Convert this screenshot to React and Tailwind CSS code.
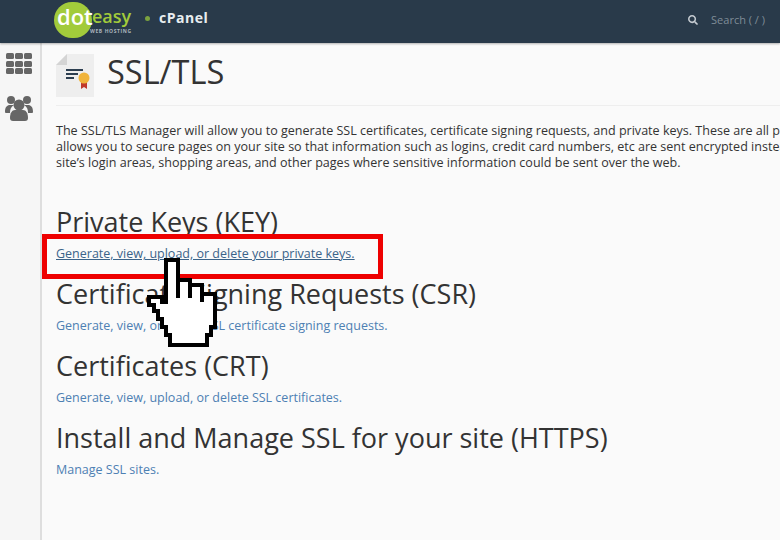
import React from "react"
import { FaSearch } from "react-icons/fa"

const sections = [
  { title: "Private Keys (KEY)", link: "Generate, view, upload, or delete your private keys.", active: true },
  { title: "Certificate Signing Requests (CSR)", link: "Generate, view, or delete SSL certificate signing requests." },
  { title: "Certificates (CRT)", link: "Generate, view, upload, or delete SSL certificates." },
  { title: "Install and Manage SSL for your site (HTTPS)", link: "Manage SSL sites." },
]

const Logo = () => (
  <div className="relative w-[80px] h-[43px] shrink-0">
    <div className="absolute left-0 top-[2px] w-[38px] h-[36px] rounded-full bg-[#a2cb3b]" />
    <span className="absolute left-[3px] top-[3px] text-[22px] leading-[26px] font-semibold text-white">dot</span>
    <span className="absolute left-[38px] top-[3px] text-[18px] leading-[26px] font-semibold text-[#a2cb3b]">easy</span>
    <span className="absolute left-[36px] top-[28px] text-[5px] leading-[6px] tracking-[0.6px] font-bold text-[#aab4bc] whitespace-nowrap">WEB HOSTING</span>
  </div>
)

const DocIcon = () => (
  <svg width="38" height="43" viewBox="0 0 38 43" className="shrink-0">
    <path d="M11 0H38V43H0V11Z" fill="#eeeeee" />
    <path d="M11 0V11H0Z" fill="#d4d4d4" />
    <path d="M10 15H27V17H10ZM10 19H22V21H10ZM10 23H18V25H10Z" fill="#2c3e50" />
    <path d="M25 28H31V35L28 33L25 35Z" fill="#c0392b" />
    <circle cx="28" cy="24" r="5.500" fill="#f0b43c" />
  </svg>
)

const UsersIcon = () => (
  <svg width="28" height="26" viewBox="0 0 28 26" className="shrink-0">
    <g fill="#666666">
      <circle cx="6" cy="5" r="4" />
      <circle cx="22" cy="5" r="4" />
      <path d="M0 17C0 12 2 10 5 10H9C6 12 5 14 5 18H2C1 18 0 18 0 17ZM28 17C28 12 26 10 23 10H19C22 12 23 14 23 18H26C27 18 28 18 28 17Z" />
      <circle cx="14" cy="10" r="5.500" />
      <path d="M5 23C5 18 7 15 10 15H18C21 15 23 18 23 23C23 25 22 26 20 26H8C6 26 5 25 5 23Z" />
    </g>
  </svg>
)

const Cursor = () => (
  <svg width="80" height="95" viewBox="145 256 80 95" className="absolute left-[145px] top-[256px]">
    <path
      d="M166 260H178V280H190V285H202V294H215V327H211V335H207V345H170V335H166V327H162V319H158V311H154V305H149V297H162V302H166Z"
      fill="#ffffff"
      stroke="#000000"
      strokeWidth="4"
    />
    <path d="M178 280V298M190 285V298M202 294V302" fill="none" stroke="#000000" strokeWidth="4" />
  </svg>
)

export default function App() {
  return (
    <div className="relative w-[780px] h-[540px] overflow-hidden flex flex-col bg-[#fafafa] text-[#333333] font-['Open_Sans',sans-serif]">
      {/* HEADER */}
      <header className="h-[43px] shrink-0 bg-[#293a4a] flex items-center pl-[54px] pr-[15px] shadow-[0_1px_2px_rgba(0,0,0,0.3)] z-10">
        <Logo />
        <span className="ml-[11px] mb-[6px] w-[5px] h-[5px] rounded-full bg-[#7ba23f]" />
        <span className="ml-[9px] mb-[9px] text-[14px] font-bold tracking-[0.5px] text-[#e8edf0]">cPanel</span>
        <div className="ml-auto flex items-center gap-[13px] mb-[3px]">
          <FaSearch className="text-[#c4cad0] text-[10px]" />
          <span className="text-[11px] text-[#7f8c97]">Search ( / )</span>
        </div>
      </header>

      <div className="flex flex-1 min-h-0">
        {/* SIDEBAR */}
        <aside className="w-[42px] shrink-0 bg-[#f6f6f6] border-r-2 border-[#dedede] flex flex-col items-center pt-[10px] pr-[2px] gap-[21px]">
          <div className="grid grid-cols-3 gap-[1.500px] w-[26px]">
            {Array.from({ length: 9 }).map((_, i) => (
              <span key={i} className="h-[6px] rounded-[1.500px] bg-[#666666]" />
            ))}
          </div>
          <UsersIcon />
        </aside>

        {/* CONTENT */}
        <main className="flex-1 min-w-0 pl-[14px] whitespace-nowrap overflow-hidden">
          <div className="flex items-center gap-[13px] pt-[11px] pb-[8px] border-b border-[#eeeeee]">
            <DocIcon />
            <h1 className="text-[32.500px] leading-[35px] mb-[8px] text-[#333333]">SSL/TLS</h1>
          </div>

          <div className="mt-[17px] text-[12.560px] leading-[16px] text-[#333333]">
            <p>The SSL/TLS Manager will allow you to generate SSL certificates, certificate signing requests, and private keys. These are all parts of using SSL</p>
            <p>allows you to secure pages on your site so that information such as logins, credit card numbers, etc are sent encrypted instead of as plain text. It</p>
            <p>site’s login areas, shopping areas, and other pages where sensitive information could be sent over the web.</p>
          </div>

          <div className="mt-[33px]">
            {sections.map((s) => (
              <section key={s.title} className="h-[72px]">
                <h2 className="text-[27px] leading-[36px] text-[#333333]">{s.title}</h2>
                <a
                  href="#"
                  className={`block w-fit mt-[5px] text-[12.500px] leading-[17px] ${
                    s.active ? "text-[#3a6389] underline" : "text-[#4d80b3]"
                  }`}
                >
                  {s.link}
                </a>
              </section>
            ))}
          </div>
        </main>
      </div>

      {/* RED HIGHLIGHT + HAND CURSOR */}
      <div className="absolute left-[42px] top-[234px] w-[341px] h-[45px] border-[5px] border-[#ee0000]" />
      <Cursor />
    </div>
  )
}
